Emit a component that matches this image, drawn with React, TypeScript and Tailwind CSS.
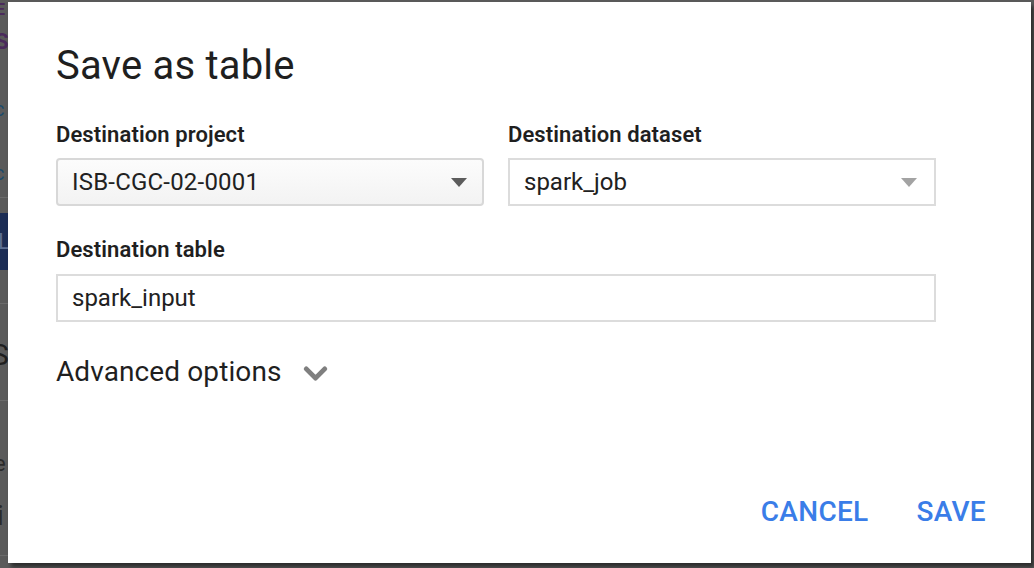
import { ChevronDown } from 'lucide-react';

const font = { fontFamily: 'Roboto, "Noto Sans", Arial, sans-serif' };

function Caret({ light }: { light?: boolean }) {
  return (
    <svg width="16" height="9" viewBox="0 0 16 9" className={light ? 'text-[#a3a3a3]' : 'text-[#5c5c5c]'}>
      <path d="M0 0 L16 0 L8 9 Z" fill="currentColor" />
    </svg>
  );
}

// Page behind the overlay: only a thin sliver is visible on the left
function BackdropStrip() {
  return (
    <div className="w-[8px] h-full overflow-hidden flex flex-col leading-none">
      <div className="h-[20px] pt-[2px] text-[16px] font-bold text-[#4a2a5c] -ml-[4px]">E</div>
      <div className="h-[34px] pt-[11px] text-[22px] font-bold text-[#4a2a5c] -ml-[5px]">S</div>
      <div className="h-[64px] pt-[45px] text-[20px] text-[#1d4a6b] -ml-[6px]">c</div>
      <div className="h-[79px] pt-[45px] text-[20px] text-[#1d4a6b] -ml-[6px]">c</div>
      <div className="h-[16px] border-t border-[#6b6b6b]"></div>
      <div className="h-[57px] bg-[#1c2d55] text-[#5d6f93] text-[22px] pt-[18px] -ml-[2px]">L</div>
      <div className="h-[33px]"></div>
      <div className="h-[97px] border-t border-[#6b6b6b] pt-[36px] text-[30px] text-[#1f1f1f] -ml-[9px]">S</div>
      <div className="h-[100px] border-t border-[#6b6b6b] pt-[52px] text-[22px] text-[#2a2a2a] -ml-[6px]">e</div>
      <div className="h-[55px] pt-[2px] text-[28px] text-[#2a2a2a] -ml-[3px]">i</div>
      <div className="border-t border-[#6b6b6b]"></div>
    </div>
  );
}

export default function App() {
  return (
    <div className="w-[1034px] h-[568px] bg-[#5a5a5a] flex overflow-hidden" style={font}>
      <BackdropStrip />
      <div className="pt-[2px]">
        <div className="w-[1023px] h-[561px] bg-white shadow-[3px_4px_4px_rgba(0,0,0,0.5)] flex flex-col pl-[48px] pt-[40px] pb-[34px]">
          <h1 className="text-[40px] leading-[48px] text-[#1f1f1f] font-normal tracking-[0.2px]">Save as table</h1>

          <div className="w-[880px] mt-[33px] grid grid-cols-2 gap-x-[24px]">
            <div>
              <div className="text-[22px] leading-[24px] font-semibold text-[#1f1f1f] tracking-[0.1px]">Destination project</div>
              <div className="mt-[11px] h-[48px] border-2 border-[#d8d8d8] rounded-[4px] bg-gradient-to-b from-[#fcfcfc] to-[#f3f3f3] flex items-center justify-between pl-[14px] pr-[15px]">
                <span className="text-[24px] text-[#212121] tracking-[0.2px]">ISB-CGC-02-0001</span>
                <Caret />
              </div>
            </div>
            <div>
              <div className="text-[22px] leading-[24px] font-semibold text-[#1f1f1f] tracking-[0.1px]">Destination dataset</div>
              <div className="mt-[11px] h-[48px] border-2 border-[#dcdcdc] bg-white flex items-center justify-between pl-[14px] pr-[17px]">
                <span className="text-[24px] text-[#212121]">spark_job</span>
                <Caret light />
              </div>
            </div>
          </div>

          <div className="w-[880px] mt-[32px]">
            <div className="text-[22px] leading-[24px] font-semibold text-[#1f1f1f] tracking-[0.1px]">Destination table</div>
            <div className="mt-[12px] h-[48px] border-2 border-[#dcdcdc] bg-white flex items-center pl-[14px]">
              <span className="text-[24px] text-[#212121]">spark_input</span>
            </div>
          </div>

          <div className="mt-[30px] flex items-center gap-[15px]">
            <span className="text-[28px] leading-[34px] text-[#1f1f1f] tracking-[0.1px]">Advanced options</span>
            <ChevronDown className="w-[37px] h-[37px] mt-[3px] text-[#7f7f7f]" strokeWidth={3.2} />
          </div>

          <div className="mt-auto flex justify-end gap-[48px] pr-[45px]">
            <button className="text-[28px] leading-[34px] font-medium text-[#3a7de8] tracking-[0.3px]">CANCEL</button>
            <button className="text-[28px] leading-[34px] font-medium text-[#3a7de8] tracking-[0.3px]">SAVE</button>
          </div>
        </div>
      </div>
    </div>
  );
}
